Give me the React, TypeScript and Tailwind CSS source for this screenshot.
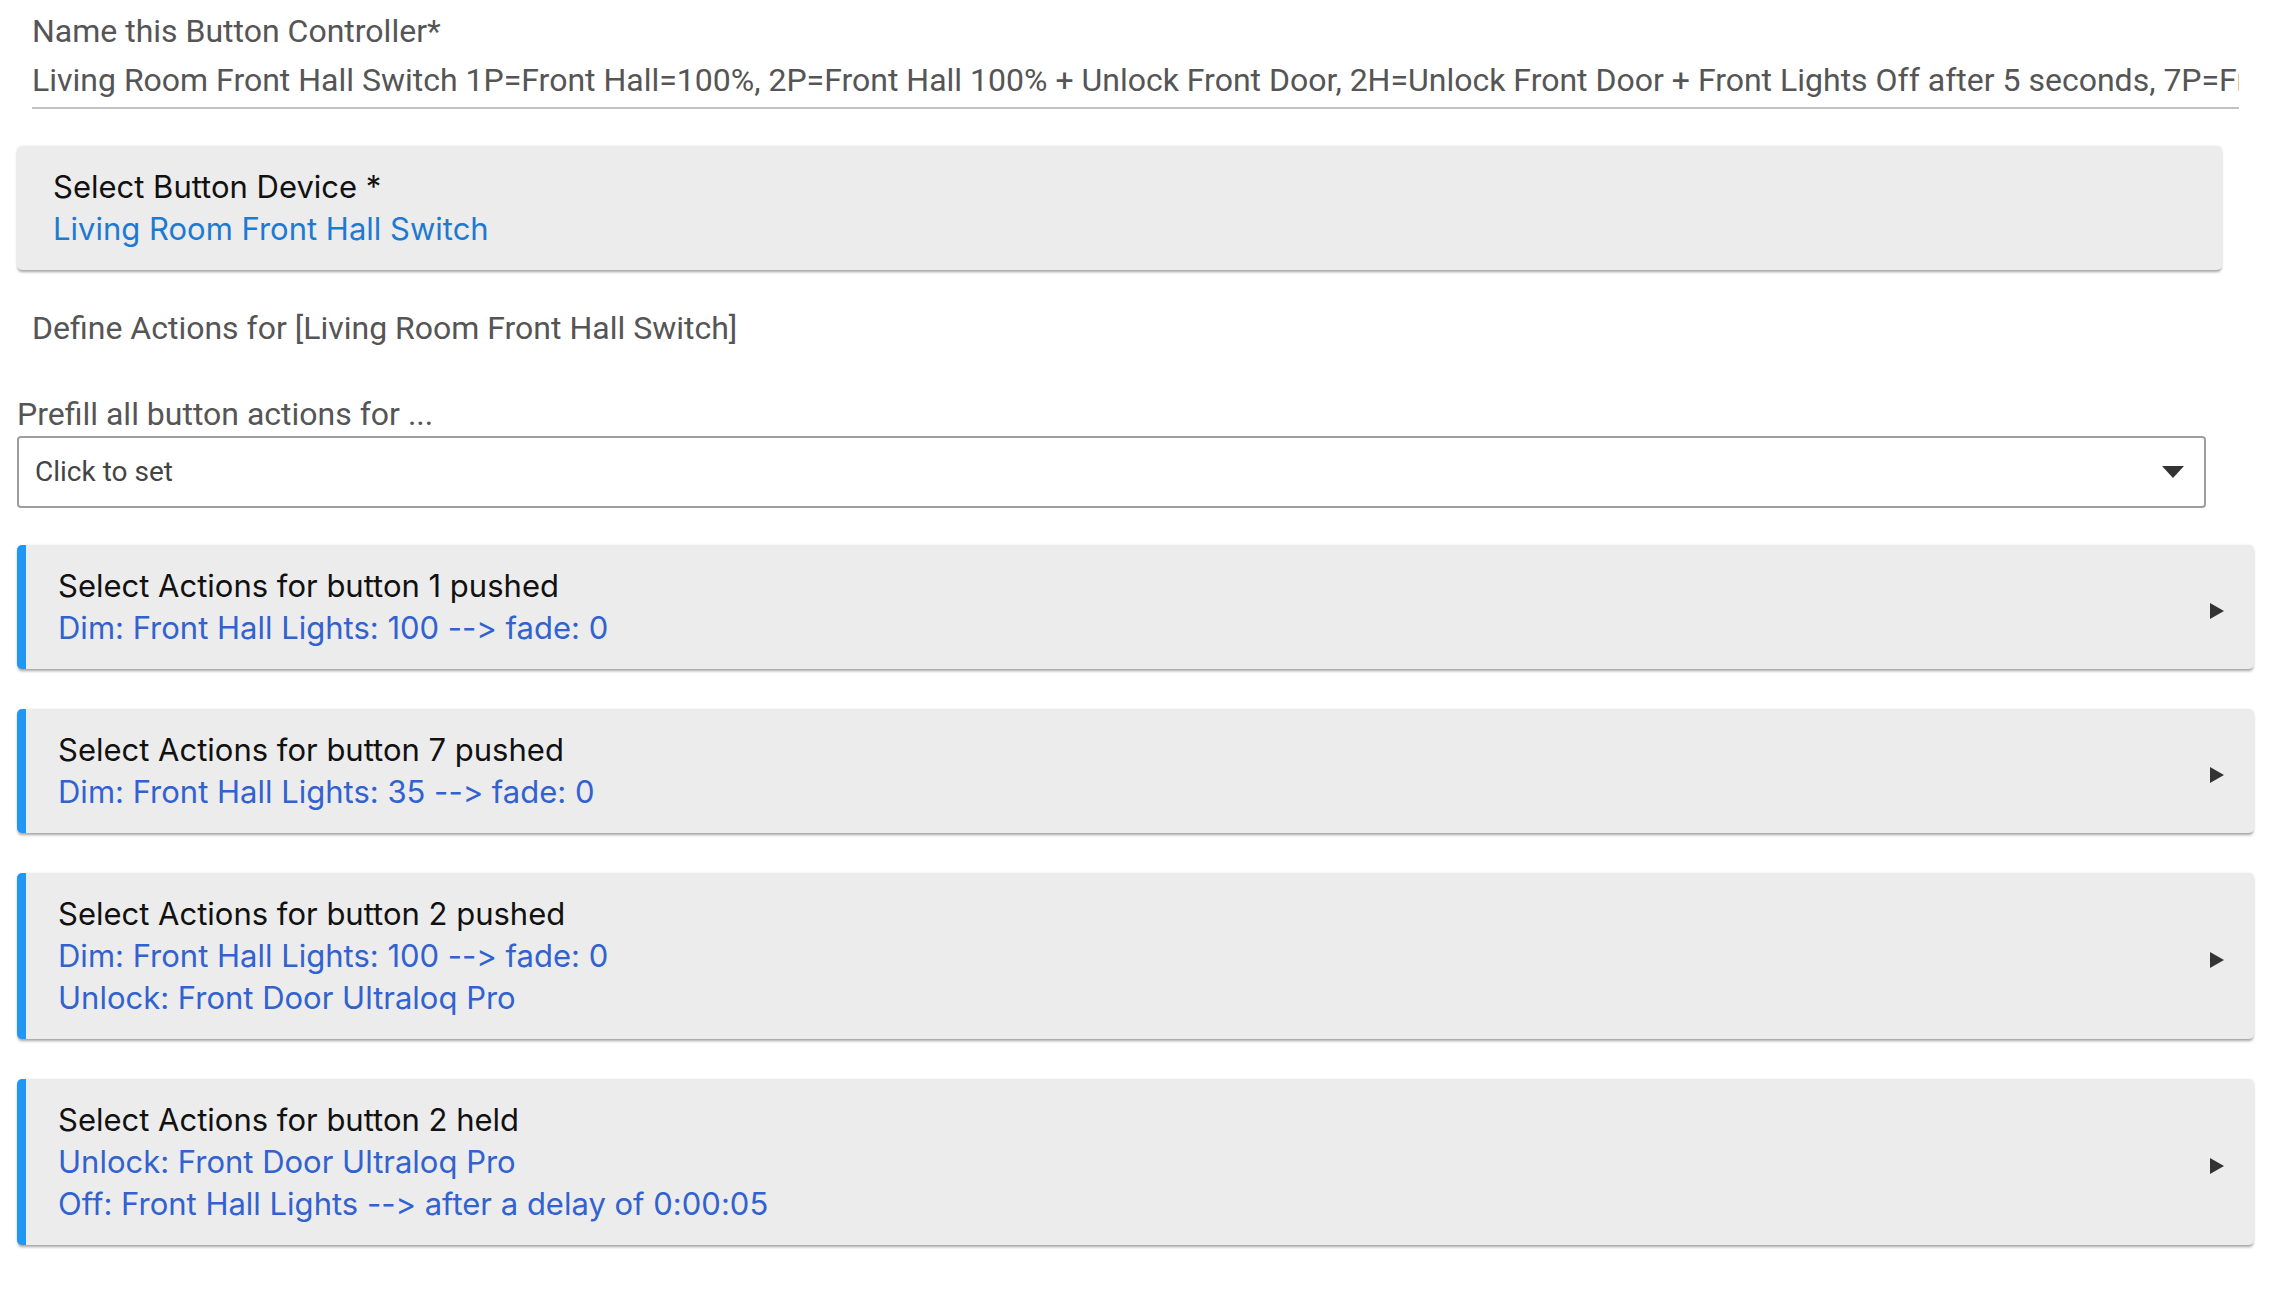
import React from 'react';

const roboto = { fontFamily: 'Roboto, "Liberation Sans", sans-serif' };
const sans = { fontFamily: 'Inter, "Noto Sans", sans-serif' };

type ActionCard = {
  title: string;
  lines: string[];
};

const cards: ActionCard[] = [
  { title: 'Select Actions for button 1 pushed', lines: ['Dim: Front Hall Lights: 100 --> fade: 0'] },
  { title: 'Select Actions for button 7 pushed', lines: ['Dim: Front Hall Lights: 35 --> fade: 0'] },
  {
    title: 'Select Actions for button 2 pushed',
    lines: ['Dim: Front Hall Lights: 100 --> fade: 0', 'Unlock: Front Door Ultraloq Pro'],
  },
  {
    title: 'Select Actions for button 2 held',
    lines: ['Unlock: Front Door Ultraloq Pro', 'Off: Front Hall Lights --> after a delay of 0:00:05'],
  },
];

const RightArrow = () => (
  <svg width="14" height="16" viewBox="0 0 14 16" className="mt-[8px] shrink-0">
    <polygon points="0,0 14,8 0,16" fill="#333333" />
  </svg>
);

const DownArrow = () => (
  <svg width="22" height="12" viewBox="0 0 22 12" className="shrink-0">
    <polygon points="0,0 22,0 11,12" fill="#333333" />
  </svg>
);

const ActionCardView: React.FC<ActionCard> = ({ title, lines }) => (
  <div className="flex items-center rounded-[5px] border-l-[9px] border-[#2196f3] bg-[#ececec] pl-[32px] pr-[30px] py-[20px] shadow-[0_3px_3px_-1px_rgba(0,0,0,0.35),0_0_3px_rgba(0,0,0,0.08)]">
    <div className="flex-1 text-[31px] leading-[42px] [font-variant-ligatures:none] [font-feature-settings:'calt'_0]" style={sans}>
      <div className="text-[#111111]">{title}</div>
      {lines.map((l) => (
        <div key={l} className="text-[#3162cf]">{l}</div>
      ))}
    </div>
    <RightArrow />
  </div>
);

export default function App() {
  return (
    <div className="min-h-screen bg-white pl-[17px] pr-[26px] pt-[10px] pb-[40px]">
      <div className="mx-[15px]" style={roboto}>
        <div className="text-[32px] leading-[42px] text-[#555555]">Name this Button Controller*</div>
        <div className="mt-[7px] overflow-hidden whitespace-nowrap border-b-2 border-[#c2c2c2] pb-[6px] text-[32px] leading-[42px] text-[#555555]">
          Living Room Front Hall Switch 1P=Front Hall=100%, 2P=Front Hall 100% + Unlock Front Door, 2H=Unlock Front Door + Front Lights Off after 5 seconds, 7P=Front Hall=35%
        </div>
      </div>

      <div className="mr-[32px] mt-[37px] rounded-[5px] bg-[#ececec] px-[36px] py-[20px] shadow-[0_3px_3px_-1px_rgba(0,0,0,0.35),0_0_3px_rgba(0,0,0,0.08)]">
        <div className="text-[31px] leading-[42px]" style={sans}>
          <div className="text-[#111111]">Select Button Device *</div>
          <div className="text-[#1e7ad1]">Living Room Front Hall Switch</div>
        </div>
      </div>

      <div className="ml-[15px] mt-[37px] text-[32px] leading-[42px] text-[#555555]" style={roboto}>
        Define Actions for [Living Room Front Hall Switch]
      </div>

      <div className="mt-[44px] text-[32px] leading-[42px] text-[#555555]" style={roboto}>
        Prefill all button actions for ...
      </div>
      <div className="mr-[48px] mt-[1px] flex h-[72px] items-center rounded-[4px] border-2 border-[#9e9e9e] bg-white pl-[16px] pr-[20px]" style={roboto}>
        <span className="flex-1 text-[28px] text-[#444444]">Click to set</span>
        <DownArrow />
      </div>

      <div className="mt-[37px] flex flex-col gap-[40px]">
        {cards.map((c) => (
          <ActionCardView key={c.title} {...c} />
        ))}
      </div>
    </div>
  );
}
